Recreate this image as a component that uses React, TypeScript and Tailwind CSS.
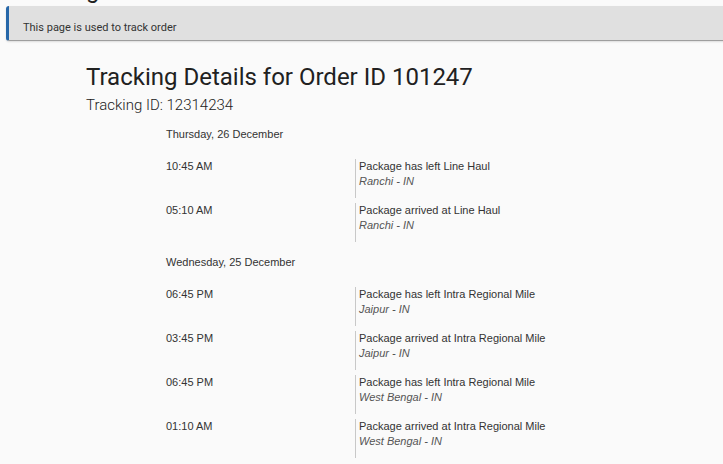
const days = [
  {
    date: "Thursday, 26 December",
    events: [
      { time: "10:45 AM", status: "Package has left Line Haul", place: "Ranchi - IN" },
      { time: "05:10 AM", status: "Package arrived at Line Haul", place: "Ranchi - IN" },
    ],
  },
  {
    date: "Wednesday, 25 December",
    events: [
      { time: "06:45 PM", status: "Package has left Intra Regional Mile", place: "Jaipur - IN" },
      { time: "03:45 PM", status: "Package arrived at Intra Regional Mile", place: "Jaipur - IN" },
      { time: "06:45 PM", status: "Package has left Intra Regional Mile", place: "West Bengal - IN" },
      { time: "01:10 AM", status: "Package arrived at Intra Regional Mile", place: "West Bengal - IN" },
    ],
  },
];

export default function App() {
  return (
    <div className="h-[464px] overflow-hidden bg-[#fafafa] font-['Roboto',sans-serif] text-[#212121]">
      <h1 className="mt-[-26px] h-[32px] pl-2 text-2xl leading-[32px] text-[#212121]">Tracking</h1>

      <div className="ml-[6px] mr-[-10px] flex h-[35px] items-center rounded-[3px] border-b border-l-[3px] border-b-[#9e9e9e] border-l-[#2566a8] bg-[#e0e0e0] pl-[14px] pt-[11px] text-[11px] text-[#333] shadow-[0_1px_2px_rgba(0,0,0,0.12)]">
        This page is used to track order
      </div>

      <div className="pl-[86px] pt-[20px]">
        <h2 className="text-[24px] leading-[32px] text-[#212121]">
          Tracking Details for Order ID 101247
        </h2>
        <p className="mt-[2px] text-[15px] font-light leading-[20px] text-[#212121]">Tracking ID: 12314234</p>
      </div>

      <div className="pl-[166px] pt-[12px] font-['Liberation_Sans',Arial,sans-serif] text-[11px] leading-[15px] text-[#333]">
        {days.map((day, i) => (
          <section key={day.date} className={i > 0 ? "mt-[13px]" : ""}>
            <p className="mb-[17px]">{day.date}</p>
            {day.events.map((e, j) => (
              <div key={j} className="mb-[5px] flex">
                <div className="w-[189px]">{e.time}</div>
                <div className="h-[39px] border-l border-[#c8c8c8] pl-[3px]">
                  <p>{e.status}</p>
                  <p className="italic text-[#555]">{e.place}</p>
                </div>
              </div>
            ))}
          </section>
        ))}
      </div>
    </div>
  );
}
